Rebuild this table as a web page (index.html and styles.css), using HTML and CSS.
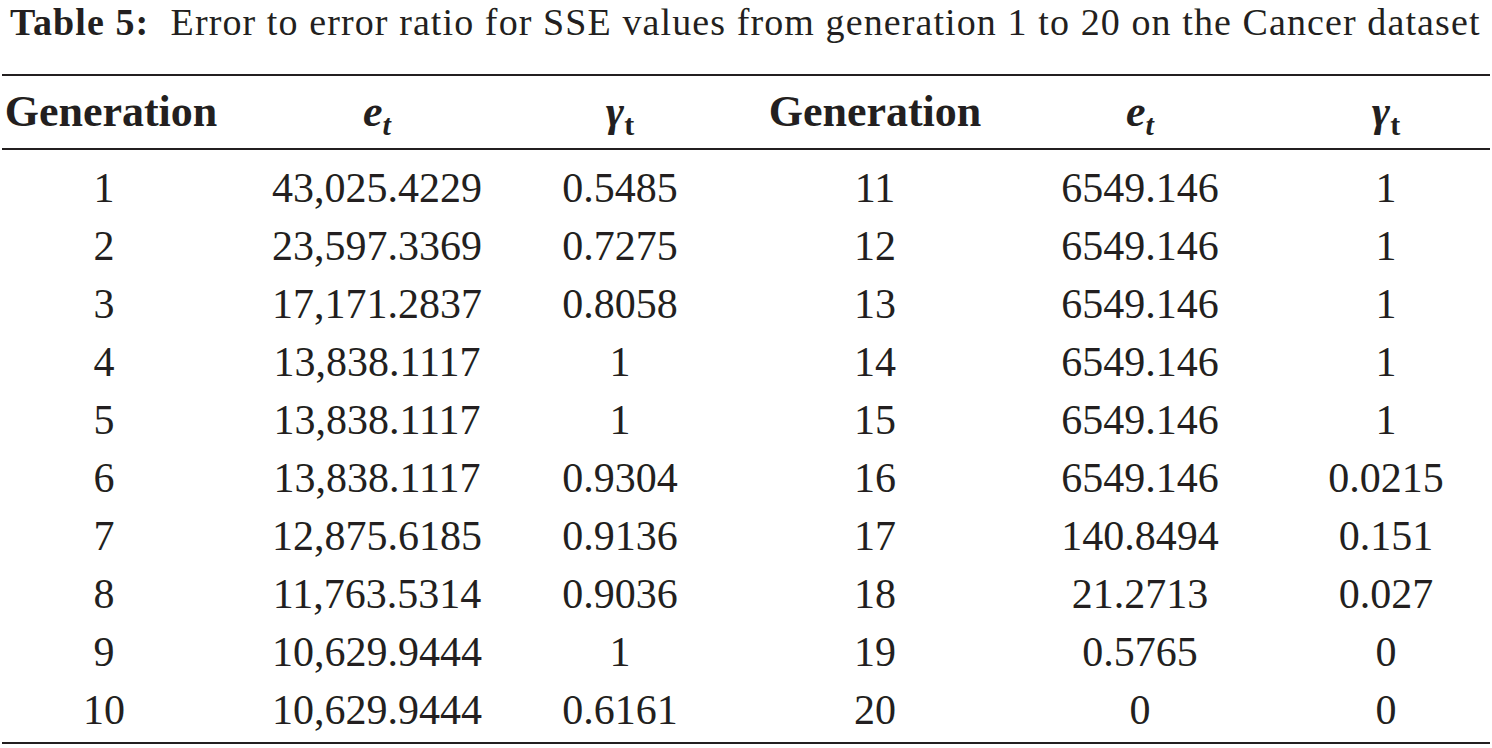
FILE: index.html
```html
<!DOCTYPE html>
<html>
<head>
<meta charset="utf-8">
<link rel="stylesheet" href="styles.css">
</head>
<body>
<div class="page">
  <p class="caption"><b>Table 5:</b>&nbsp; Error to error ratio for SSE values from generation 1 to 20 on the Cancer dataset</p>
  <div class="table">
    <div class="row head">
      <div class="c1">Generation</div>
      <div class="c2"><i>e</i><sub class="sit">t</sub></div>
      <div class="c3"><i>γ</i><sub class="sup">t</sub></div>
      <div class="c4">Generation</div>
      <div class="c5"><i>e</i><sub class="sit">t</sub></div>
      <div class="c6"><i>γ</i><sub class="sup">t</sub></div>
    </div>
    <div class="tbody">
      <div class="row"><div class="c1">1</div><div class="c2">43,025.4229</div><div class="c3">0.5485</div><div class="c4">11</div><div class="c5">6549.146</div><div class="c6">1</div></div>
      <div class="row"><div class="c1">2</div><div class="c2">23,597.3369</div><div class="c3">0.7275</div><div class="c4">12</div><div class="c5">6549.146</div><div class="c6">1</div></div>
      <div class="row"><div class="c1">3</div><div class="c2">17,171.2837</div><div class="c3">0.8058</div><div class="c4">13</div><div class="c5">6549.146</div><div class="c6">1</div></div>
      <div class="row"><div class="c1">4</div><div class="c2">13,838.1117</div><div class="c3">1</div><div class="c4">14</div><div class="c5">6549.146</div><div class="c6">1</div></div>
      <div class="row"><div class="c1">5</div><div class="c2">13,838.1117</div><div class="c3">1</div><div class="c4">15</div><div class="c5">6549.146</div><div class="c6">1</div></div>
      <div class="row"><div class="c1">6</div><div class="c2">13,838.1117</div><div class="c3">0.9304</div><div class="c4">16</div><div class="c5">6549.146</div><div class="c6">0.0215</div></div>
      <div class="row"><div class="c1">7</div><div class="c2">12,875.6185</div><div class="c3">0.9136</div><div class="c4">17</div><div class="c5">140.8494</div><div class="c6">0.151</div></div>
      <div class="row"><div class="c1">8</div><div class="c2">11,763.5314</div><div class="c3">0.9036</div><div class="c4">18</div><div class="c5">21.2713</div><div class="c6">0.027</div></div>
      <div class="row"><div class="c1">9</div><div class="c2">10,629.9444</div><div class="c3">1</div><div class="c4">19</div><div class="c5">0.5765</div><div class="c6">0</div></div>
      <div class="row"><div class="c1">10</div><div class="c2">10,629.9444</div><div class="c3">0.6161</div><div class="c4">20</div><div class="c5">0</div><div class="c6">0</div></div>
    </div>
  </div>
</div>
</body>
</html>
```
FILE: styles.css
```css
html, body {
  margin: 0;
  padding: 0;
  background: #ffffff;
}
body {
  font-family: "Liberation Serif", "Times New Roman", serif;
  color: #231f20;
}
.page {
  width: 1492px;
  padding: 0 2px;
  box-sizing: border-box;
}
.caption {
  margin: 0;
  padding: 2px 0 0 8px;
  font-size: 38px;
  line-height: 40px;
  letter-spacing: 1.1px;
  white-space: nowrap;
}
.caption b {
  font-weight: bold;
}
.table {
  margin-top: 32px;
  border-top: 2px solid #231f20;
  border-bottom: 2px solid #231f20;
}
.row {
  display: grid;
  grid-template-columns: 238px 260px 240px 270px 260px 1fr;
  text-align: center;
  white-space: nowrap;
}
.head {
  font-size: 44px;
  font-weight: bold;
  line-height: 72px;
  height: 72px;
  border-bottom: 2px solid #231f20;
}
.head i {
  font-style: italic;
  font-weight: bold;
}
.head sub {
  font-size: 30px;
  line-height: 0;
  vertical-align: -9px;
}
.head .sit {
  font-style: italic;
}
.head .sup {
  font-style: normal;
}
.tbody {
  padding: 9px 0 3px;
  font-size: 42px;
  line-height: 58px;
}
.c1 { padding-right: 34px; }
.head .c1 { padding-right: 20px; }
.c2 { padding-left: 14px; }
.c6 { padding-left: 12px; }
```
